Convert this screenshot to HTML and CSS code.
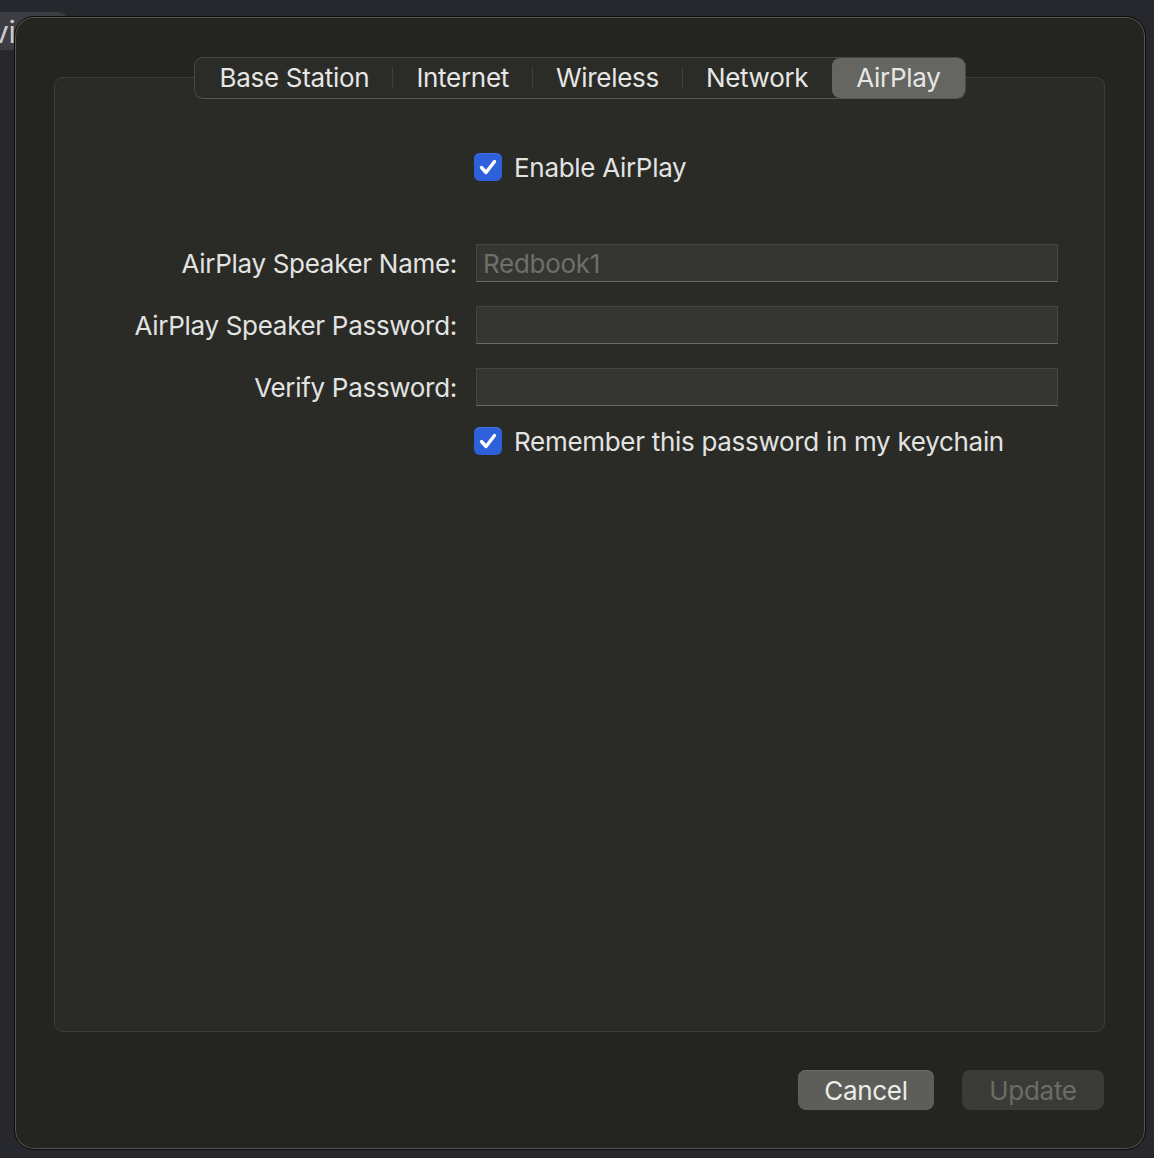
FILE: index.html
```html
<!DOCTYPE html>
<html>
<head>
    <title>AirPlay</title>
    <link rel="stylesheet" href="styles.css">
</head>
<body>
    <div class="backdrop-tab">vi</div>
    <div class="desktop">
        <div class="window">
            <div class="tabs-wrap">
                <div class="tabs">
                    <div class="tab">Base Station</div>
                    <span class="sep"></span>
                    <div class="tab">Internet</div>
                    <span class="sep"></span>
                    <div class="tab">Wireless</div>
                    <span class="sep"></span>
                    <div class="tab">Network</div>
                    <span class="sep sep-hidden"></span>
                    <div class="tab tab-active">AirPlay</div>
                </div>
            </div>

            <div class="group">
                <div class="row row-check-top">
                    <div class="label"></div>
                    <label class="check">
                        <span class="box">
                            <svg viewBox="0 0 28 28" width="28" height="28">
                                <path d="M7.5 14.5 L12 19.5 L20.5 8.5" fill="none" stroke="#fff" stroke-width="3.4" stroke-linecap="round" stroke-linejoin="round"/>
                            </svg>
                        </span>
                        Enable AirPlay
                    </label>
                </div>

                <div class="row row-first-field">
                    <div class="label">AirPlay Speaker Name:</div>
                    <input class="field" type="text" value="Redbook1" disabled>
                </div>
                <div class="row row-field">
                    <div class="label">AirPlay Speaker Password:</div>
                    <input class="field" type="password">
                </div>
                <div class="row row-field">
                    <div class="label">Verify Password:</div>
                    <input class="field" type="password">
                </div>

                <div class="row row-check">
                    <div class="label"></div>
                    <label class="check">
                        <span class="box">
                            <svg viewBox="0 0 28 28" width="28" height="28">
                                <path d="M7.5 14.5 L12 19.5 L20.5 8.5" fill="none" stroke="#fff" stroke-width="3.4" stroke-linecap="round" stroke-linejoin="round"/>
                            </svg>
                        </span>
                        Remember this password in my keychain
                    </label>
                </div>
            </div>

            <div class="actions">
                <button class="btn btn-cancel">Cancel</button>
                <button class="btn btn-update" disabled>Update</button>
            </div>
        </div>
    </div>
</body>
</html>
```

FILE: styles.css
```css
body {
    margin: 0;
    background-color: #27282d;
    font-family: Inter, "Noto Sans", sans-serif;
    letter-spacing: -0.3px;
    color: #e3e3e1;
    height: 1158px;
    overflow: hidden;
}
.backdrop-tab {
    position: absolute;
    left: -20px;
    top: 12px;
    width: 88px;
    height: 38px;
    background-color: #3c3d42;
    border-radius: 0 10px 0 0;
    color: #c9c9cb;
    font-size: 30px;
    line-height: 40px;
    padding-left: 12px;
    box-sizing: border-box;
}
.desktop {
    position: relative;
    padding: 16px 0 0 14px;
}
.window {
    width: 1132px;
    height: 1134px;
    box-sizing: border-box;
    background-color: #242520;
    border: 1px solid #0c0c0b;
    border-radius: 20px;
    box-shadow: inset 0 0 0 1px #575854;
    padding: 40px 40px 0 39px;
    display: flex;
    flex-direction: column;
}
.tabs-wrap {
    display: flex;
    justify-content: center;
    margin-bottom: -22px;
    position: relative;
    z-index: 1;
}
.tabs {
    display: flex;
    align-items: center;
    height: 42px;
    box-sizing: border-box;
    background-color: #2b2c28;
    border: 1px solid #474844;
    border-bottom-color: #575854;
    border-radius: 9px;
}
.tab {
    font-size: 26px;
    line-height: 40px;
    padding: 0 23px;
    color: #e6e6e4;
    white-space: nowrap;
}
.tab:first-child {
    padding-left: 25px;
}
.tab-active {
    background-color: #656662;
    border-radius: 8px;
    padding: 0 24px;
    height: 40px;
}
.sep {
    width: 1px;
    height: 22px;
    background-color: #3e3f3b;
}
.sep-hidden {
    background-color: transparent;
}
.group {
    height: 955px;
    box-sizing: border-box;
    background-color: #2a2b27;
    border: 1px solid #3c3d39;
    border-radius: 9px;
    padding-top: 75px;
}
.row {
    display: flex;
    align-items: center;
}
.label {
    width: 402px;
    flex-shrink: 0;
    text-align: right;
    font-size: 26px;
    margin-right: 19px;
    white-space: nowrap;
}
.row-first-field {
    margin-top: 63px;
}
.row-field {
    margin-top: 24px;
}
.row-check {
    margin-top: 21px;
}
.field {
    width: 582px;
    height: 38px;
    box-sizing: border-box;
    background-color: #353632;
    border: 1px solid #444541;
    border-bottom-color: #6a6b67;
    margin: 0;
    padding: 0 6px;
    font-family: Inter, "Noto Sans", sans-serif;
    letter-spacing: -0.3px;
    font-size: 26px;
    color: #6e6f6b;
    outline: none;
}
.check {
    display: flex;
    align-items: center;
    height: 28px;
    margin-left: -2px;
    font-size: 26px;
    white-space: nowrap;
}
.box {
    width: 28px;
    height: 28px;
    border-radius: 6px;
    background-color: #2d60da;
    box-shadow: inset 0 1px 0 #3f72e6;
    margin-right: 12px;
    display: block;
}
.box svg {
    display: block;
}
.actions {
    display: flex;
    justify-content: flex-end;
    margin-top: 38px;
    padding-right: 1px;
}
.btn {
    height: 40px;
    border: none;
    border-radius: 8px;
    font-family: Inter, "Noto Sans", sans-serif;
    letter-spacing: -0.3px;
    font-size: 26px;
    padding: 0;
}
.btn-cancel {
    width: 136px;
    background-color: #5d5e5a;
    color: #ececea;
    box-shadow: inset 0 1px 0 #6a6b67;
    margin-right: 28px;
}
.btn-update {
    width: 142px;
    background-color: #3a3b37;
    color: #6b6c68;
}
```
